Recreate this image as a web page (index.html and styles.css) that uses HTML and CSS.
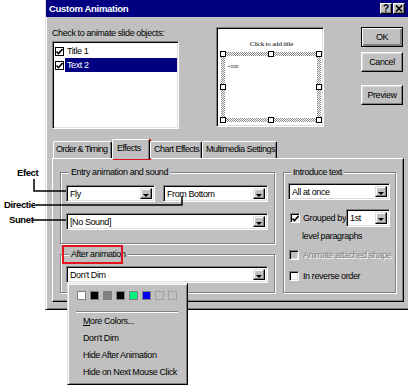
FILE: index.html
```html
<!DOCTYPE html>
<html>
<head>
<meta charset="utf-8">
<title>Custom Animation</title>
<link rel="stylesheet" href="styles.css">
</head>
<body>
<div class="screen">
  <div class="dialog">
    <div class="titlebar">
      <span class="title">Custom Animation</span>
      <span class="tb-btns">
        <span class="tb-btn">?</span>
        <span class="tb-btn"><svg width="8" height="7" viewBox="0 0 8 7"><path d="M1 0.5 L7 6.5 M7 0.5 L1 6.5" stroke="#000" stroke-width="1.6"/></svg></span>
      </span>
    </div>
    <div class="body">
      <div class="top">
        <div class="objects">
          <div class="lbl">Check to animate slide objects:</div>
          <div class="listbox sunken">
            <div class="item"><span class="chk"><svg width="7" height="7" viewBox="0 0 7 7"><path d="M0.5 3.5 L2.5 5.5 L6.5 1" fill="none" stroke="#000" stroke-width="1.6"/></svg></span><span class="itxt">Title 1</span></div>
            <div class="item sel"><span class="chk"><svg width="7" height="7" viewBox="0 0 7 7"><path d="M0.5 3.5 L2.5 5.5 L6.5 1" fill="none" stroke="#000" stroke-width="1.6"/></svg></span><span class="itxt">Text 2</span></div>
          </div>
        </div>
        <div class="preview sunken">
          <div class="slide-title">Click to add title</div>
          <div class="hatch">
            <div class="hatch-inner"><span class="tiny">▪ ≡≡≡</span></div>
            <span class="h h-tl"></span><span class="h h-tc"></span><span class="h h-tr"></span>
            <span class="h h-ml"></span><span class="h h-mr"></span>
            <span class="h h-bl"></span><span class="h h-bc"></span><span class="h h-br"></span>
          </div>
        </div>
        <div class="buttons">
          <div class="btn default">OK</div>
          <div class="btn">Cancel</div>
          <div class="btn pv">Preview</div>
        </div>
      </div>
      <div class="tabs">
        <div class="tab t1">Order &amp; Timing</div>
        <div class="tab active">Effects</div>
        <div class="tab t3">Chart Effects</div>
        <div class="tab t4">Multimedia Settings</div>
      </div>
      <div class="panel">
        <div class="col-left">
          <div class="group entry">
            <div class="legend">Entry animation and sound</div>
            <div class="row">
              <div class="combo c-fly sunken"><span class="ctext">Fly</span><span class="cbtn"></span></div>
              <div class="combo c-dir sunken"><span class="ctext">From Bottom</span><span class="cbtn"></span></div>
            </div>
            <div class="row row2">
              <div class="combo c-full sunken"><span class="ctext">[No Sound]</span><span class="cbtn"></span></div>
            </div>
          </div>
          <div class="group after">
            <div class="legend">After animation</div>
            <div class="row row-after">
              <div class="combo c-full sunken"><span class="ctext">Don't Dim</span><span class="cbtn"></span></div>
            </div>
          </div>
        </div>
        <div class="group intro">
          <div class="legend">Introduce text</div>
          <div class="row">
            <div class="combo c-intro sunken"><span class="ctext">All at once</span><span class="cbtn"></span></div>
          </div>
          <div class="row grouped">
            <span class="cb sunken"><svg width="7" height="7" viewBox="0 0 7 7"><path d="M0.5 3.5 L2.5 5.5 L6.5 1" fill="none" stroke="#000" stroke-width="1.6"/></svg></span>
            <span class="cbl">Grouped by</span>
            <div class="combo c-lvl sunken"><span class="ctext">1st</span><span class="cbtn"></span></div>
          </div>
          <div class="lvl">level paragraphs</div>
          <div class="row cbrow dis"><span class="cb sunken off"></span><span class="cbl">Animate attached shape</span></div>
          <div class="row cbrow rev"><span class="cb sunken"></span><span class="cbl">In reverse order</span></div>
        </div>
      </div>
    </div>
  </div>

  <div class="redbox rb-tab"></div>
  <div class="redbox rb-after"></div>

  <svg class="lines" width="408" height="386" viewBox="0 0 408 386">
    <path d="M34 179 V191 H66" fill="none" stroke="#000" stroke-width="1.5"/>
    <path d="M36 205 H182 V196" fill="none" stroke="#000" stroke-width="1.5"/>
    <path d="M32 220 H66" fill="none" stroke="#000" stroke-width="1.5"/>
  </svg>
  <div class="note n-efect">Efect</div>
  <div class="note n-dir">Directie</div>
  <div class="note n-sunet">Sunet</div>

  <div class="menu">
    <div class="swatches">
      <span class="sw s-white"></span>
      <span class="sw s-black"></span>
      <span class="sw s-gray"></span>
      <span class="sw s-black"></span>
      <span class="sw s-green"></span>
      <span class="sw s-blue"></span>
      <span class="sw s-empty"></span>
      <span class="sw s-empty"></span>
    </div>
    <div class="sep"></div>
    <div class="mi"><u>M</u>ore Colors...</div>
    <div class="mi">Don't Dim</div>
    <div class="mi">Hide After Animation</div>
    <div class="mi">Hide on Next Mouse Click</div>
  </div>
</div>
</body>
</html>
```

FILE: styles.css
```css
* { box-sizing: border-box; margin: 0; padding: 0; }
html, body { background: #fff; }
body {
  width: 408px; height: 386px; overflow: hidden;
  font-family: "Liberation Sans", Arial, sans-serif;
  font-size: 9px; letter-spacing: -0.4px; color: #000; line-height: 12px;
}
.screen { position: relative; width: 408px; height: 386px; padding-left: 45px; }

.dialog {
  width: 363px; height: 310px; background: #c0c0c0;
  border-left: 1px solid #dfdfdf; border-bottom: 1px solid #000;
  box-shadow: inset 1px 0 #fff, inset 0 -1px #808080;
  display: flex; flex-direction: column;
}
.titlebar {
  height: 17px; background: #000080; color: #fff;
  display: flex; align-items: center; justify-content: space-between;
  padding: 0 3px 0 3px;
}
.title { font-weight: bold; font-size: 9.5px; letter-spacing: -0.3px; }
.tb-btns { display: flex; gap: 1px; }
.tb-btn {
  width: 12px; height: 11px; background: #c0c0c0; color: #000;
  font-weight: bold; font-size: 10px; line-height: 9px; letter-spacing: 0;
  display: flex; align-items: center; justify-content: center;
  border: 1px solid; border-color: #fff #000 #000 #fff;
  box-shadow: inset -1px -1px #808080;
}

.sunken {
  border: 1px solid; border-color: #808080 #fff #fff #808080;
  box-shadow: inset 1px 1px #000, inset -1px -1px #dfdfdf;
  background: #fff;
}

.body { padding: 10px 0 0 6px; }
.top { display: flex; align-items: flex-start; }
.objects { width: 127px; }
.lbl { height: 12px; line-height: 12px; margin-bottom: 2px; white-space: nowrap; }
.listbox { height: 88px; padding: 2px 1px 0 2px; }
.item { display: flex; align-items: center; height: 14px; }
.chk {
  width: 9px; height: 9px; border: 1px solid #000; background: #fff;
  display: flex; align-items: center; justify-content: center; margin-right: 1px;
}
.itxt { padding: 0 2px; line-height: 14px; flex: 1; }
.item.sel .itxt { background: #000080; color: #fff; }

.preview {
  width: 108px; height: 100px; margin-left: 37px;
  padding: 12px 3px 0 4px; position: relative;
}
.slide-title {
  font-family: "Liberation Serif", serif; font-size: 7px; line-height: 8px; letter-spacing: -0.2px;
  text-align: center; height: 12px; padding-left: 2px; white-space: nowrap;
}
.hatch {
  position: relative; width: 100px; height: 70px;
  background: repeating-conic-gradient(#8a8a8a 0 25%, #fff 0 50%) 0 0 / 2px 2px;
  padding: 4px;
}
.hatch-inner { background: #fff; width: 100%; height: 100%; padding: 3px 3px; }
.tiny { font-size: 5px; line-height: 6px; color: #333; letter-spacing: -0.3px; }
.h { position: absolute; width: 6px; height: 6px; background: #fff; border: 1px solid #000; }
.h-tl { left: -1px; top: -1px; } .h-tc { left: 47px; top: -1px; } .h-tr { right: -1px; top: -1px; }
.h-ml { left: -1px; top: 32px; } .h-mr { right: -1px; top: 32px; }
.h-bl { left: -1px; bottom: -1px; } .h-bc { left: 47px; bottom: -1px; } .h-br { right: -1px; bottom: -1px; }

.buttons { margin-left: 37px; width: 42px; display: flex; flex-direction: column; }
.btn {
  height: 20px; display: flex; align-items: center; justify-content: center;
  border: 1px solid; border-color: #fff #000 #000 #fff;
  box-shadow: inset -1px -1px #808080, inset 1px 1px #dfdfdf;
}
.btn + .btn { margin-top: 5px; }
.btn.pv { margin-top: 13px; height: 20px; }
.btn.default {
  border: 1px solid #000;
  box-shadow: inset 1px 1px #fff, inset -2px -2px #808080, inset -1px -1px #000;
}

.tabs { display: flex; align-items: flex-end; height: 19px; margin-top: 10px; padding-left: 1px; position: relative; z-index: 1; }
.tab {
  height: 17px; line-height: 15px; padding: 0 2px; white-space: nowrap; letter-spacing: -0.5px;
  border: 1px solid; border-color: #fff #000 transparent #fff; border-bottom: 0;
  box-shadow: inset -1px 0 #808080; border-radius: 2px 2px 0 0; background: #c0c0c0;
}
.tab.t1 { width: 59px; padding-left: 2px; letter-spacing: -0.65px; }
.tab.active { height: 20px; margin-bottom: -1px; width: 38px; padding: 0 4px; line-height: 17px; }
.tab.t3 { width: 52px; padding-left: 3px; }
.tab.t4 { width: 75px; padding-left: 3px; }

.panel {
  width: 352px; height: 144px; display: flex; gap: 8px;
  border: 1px solid; border-color: #fff #000 #000 #fff;
  box-shadow: inset -1px -1px #808080;
  padding: 13px 7px 8px 7px;
}
.col-left { width: 215px; display: flex; flex-direction: column; gap: 10px; }
.group {
  border: 1px solid #808080;
  box-shadow: inset 1px 1px #fff, 1px 1px #fff;
}
.legend { display: table; margin: -7px 0 0 3px; padding: 0 2px; background: #c0c0c0; line-height: 12px; white-space: nowrap; }
.entry { height: 72px; padding: 0 6px 0 5px; }
.after { flex: 1; padding: 0 6px 0 5px; }
.intro { width: 113px; padding: 0 5px 0 4px; }
.row { display: flex; align-items: center; }
.entry .row { margin-top: 7px; gap: 8px; }
.entry .row2 { margin-top: 11px; }
.row-after { margin-top: 6px; }

.combo { height: 17px; display: flex; align-items: stretch; padding: 2px; }
.ctext { flex: 1; padding-left: 1px; line-height: 13px; white-space: nowrap; overflow: hidden; }
.cbtn {
  width: 12px; background: #c0c0c0; position: relative;
  border: 1px solid; border-color: #dfdfdf #000 #000 #dfdfdf;
  box-shadow: inset -1px -1px #808080, inset 1px 1px #fff;
}
.cbtn::after {
  content: ""; position: absolute; left: 2px; top: 5px;
  border-left: 3px solid transparent; border-right: 3px solid transparent; border-top: 3px solid #000;
}
.c-fly { width: 89px; }
.c-dir { width: 105px; }
.c-full { width: 202px; }
.c-intro { width: 102px; margin-top: 5px; }
.grouped { margin-top: 9px; height: 18px; }
.c-lvl { width: 44px; height: 18px; margin-left: auto; }
.cb {
  width: 10px; height: 10px; flex: none;
  display: flex; align-items: center; justify-content: center;
}
.grouped .cb { margin-left: 2px; }
.cbl { margin-left: 3px; white-space: nowrap; }
.cb.off { background: #c0c0c0; }
.lvl { margin: 3px 0 0 14px; white-space: nowrap; }
.cbrow { margin-top: 7px; padding-left: 1px; }
.cbrow .cbl { margin-left: 4px; }
.rev { margin-top: 9px; }
.dis .cbl { color: #808080; text-shadow: 1px 1px 0 #fff; }

.redbox { position: absolute; border: 2px solid #e0141c; }
.rb-tab { left: 113px; top: 139px; width: 38px; height: 21px; }
.rb-after { left: 62px; top: 245px; width: 61px; height: 19px; }

.lines { position: absolute; left: 0; top: 0; pointer-events: none; }
.note { position: absolute; font-weight: bold; font-size: 9.5px; line-height: 12px; letter-spacing: -0.4px; }
.n-efect { left: 17px; top: 167px; }
.n-dir { left: 4px; top: 199px; }
.n-sunet { left: 9px; top: 214px; }

.menu {
  position: absolute; left: 67px; top: 283px; width: 121px; height: 102px;
  background: #c0c0c0;
  border: 1px solid; border-color: #dfdfdf #000 #000 #dfdfdf;
  box-shadow: inset 1px 1px #fff, inset -1px -1px #808080;
  padding: 7px 6px 0 9px;
}
.swatches { display: flex; gap: 4px; height: 10px; }
.sw { width: 9px; height: 9px; border: 1px solid #808080; }
.s-white { background: #fff; }
.s-black { background: #000; }
.s-gray { background: #808080; }
.s-green { background: #00f080; }
.s-blue { background: #0000f0; }
.s-empty { background: #c0c0c0; border-color: #a0a0a0; }
.sep { margin: 10px 3px 0 -1px; height: 2px; border-top: 1px solid #808080; border-bottom: 1px solid #fff; }
.mi { padding-left: 6px; height: 17px; line-height: 17px; white-space: nowrap; }
.mi:first-of-type { margin-top: 4px; }
```
